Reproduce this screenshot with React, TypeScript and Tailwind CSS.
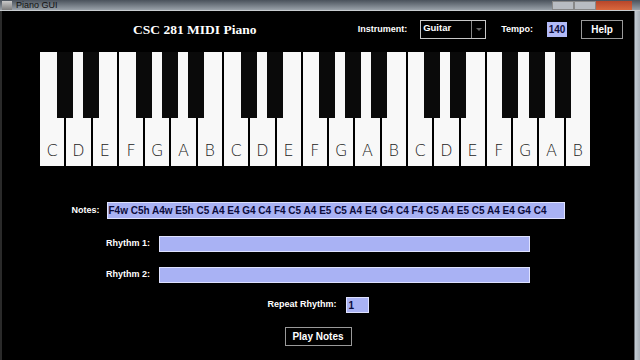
import React from "react";

const WHITE = ["C", "D", "E", "F", "G", "A", "B"];
const KEY_W = 550 / 21;

const sans = { fontFamily: '"Liberation Sans", Arial, sans-serif' };

function Keyboard() {
  const whites = Array.from({ length: 21 }, (_, i) => WHITE[i % 7]);
  // black keys sit right after C, D, F, G, A
  const blacks = whites
    .map((n, i) => ({ n, i }))
    .filter((k) => ["C", "D", "F", "G", "A"].includes(k.n));

  return (
    <div className="relative ml-[38px] mt-[4px] h-[114px] w-[550px] bg-black">
      <div className="flex h-full">
        {whites.map((n, i) => (
          <div
            key={i}
            className="flex h-full flex-1 items-end justify-center border-r-[2px] border-black bg-[#f8f8f8] pb-[7px] last:border-r-0"
          >
            <span
              className="text-[16px] font-light leading-none text-[#222] antialiased"
              style={{ fontFamily: '"DejaVu Sans", "Open Sans", sans-serif' }}
            >
              {n}
            </span>
          </div>
        ))}
      </div>
      {blacks.map(({ i }) => (
        <div
          key={i}
          className="absolute top-0 h-[66px] w-[16px] bg-[#0a0a0a]"
          style={{ left: (i + 1) * KEY_W - 9 }}
        />
      ))}
    </div>
  );
}

function Field({ w, h, children }: { w: string; h: string; children?: React.ReactNode }) {
  return (
    <div
      className={`${w} ${h} flex items-center border border-[#dfe2ff] bg-[#a9b2f4] px-[1px] text-[10px] font-bold text-[#0c0c3c]`}
      style={sans}
    >
      {children}
    </div>
  );
}

export default function App() {
  const notes =
    "F4w C5h A4w E5h C5 A4 E4 G4 C4 F4 C5 A4 E5 C5 A4 E4 G4 C4 F4 C5 A4 E5 C5 A4 E4 G4 C4";

  return (
    <div className="flex h-[360px] w-[640px] flex-col overflow-hidden bg-black antialiased" style={sans}>
      {/* window title bar, mostly scrolled off */}
      <div className="flex h-[11px] items-center overflow-hidden border-b border-[#c8ccd0] bg-gradient-to-b from-[#4a525c] to-[#9aa2aa]">
        <div className="ml-[2px] h-[9px] w-[10px] bg-gradient-to-b from-[#c9c9c9] to-[#7c7c7c]" />
        <span className="ml-[4px] text-[9px] leading-[10px] text-[#111]">Piano GUI</span>
        <div className="ml-auto flex h-[10px] items-end">
          <div className="h-[9px] w-[22px] border border-[#888] bg-[#b8bcc2]" />
          <div className="h-[9px] w-[22px] border border-[#888] bg-[#b8bcc2]" />
          <div className="mr-[8px] h-[9px] w-[36px] bg-gradient-to-b from-[#b8462a] to-[#d9683e]" />
        </div>
      </div>

      <div className="flex flex-1">
        <div className="w-[2px] bg-[#2a2a2a]" />
        <div className="flex flex-1 flex-col bg-black text-white">
          {/* header */}
          <div className="flex h-[37px] items-center">
            <span
              className="ml-[131px] mt-[1px] text-[13.5px] font-bold text-white"
              style={{ fontFamily: '"Liberation Serif", "DejaVu Serif", serif' }}
            >
              CSC 281 MIDI Piano
            </span>
            <div className="ml-auto mr-[11px] flex items-center text-[9px] font-bold">
              <span>Instrument:</span>
              <div className="ml-[13px] flex h-[19px] w-[66px] border border-[#c8c8c8]">
                <span className="flex-1 pl-[2px] pt-[2px] text-[9.5px] leading-none">Guitar</span>
                <div className="flex w-[14px] items-center justify-center border-l border-[#888]">
                  <div className="h-0 w-0 border-x-[3px] border-t-[3px] border-x-transparent border-t-[#666]" />
                </div>
              </div>
              <span className="ml-[15px]">Tempo:</span>
              <div className="ml-[14px] flex h-[15px] w-[20px] items-center justify-center bg-[#b3bbf8] text-[10px] text-[#0c0c3c]">
                140
              </div>
              <div className="ml-[14px] flex h-[19px] w-[42px] items-center justify-center border border-[#9a9a9a] text-[10px]">
                Help
              </div>
            </div>
          </div>

          <Keyboard />

          <div className="flex flex-col items-center text-[9px] font-bold">
            <div className="mt-[36px] flex items-center">
              <span className="mr-[7px]">Notes:</span>
              <Field w="w-[458px]" h="h-[17px]">
                <span className="whitespace-nowrap">{notes}</span>
              </Field>
            </div>
            <div className="mt-[17px] flex items-center">
              <span className="mr-[9px]">Rhythm 1:</span>
              <Field w="w-[371px]" h="h-[16px]" />
            </div>
            <div className="mt-[15px] flex items-center">
              <span className="mr-[9px]">Rhythm 2:</span>
              <Field w="w-[371px]" h="h-[16px]" />
            </div>
            <div className="mt-[14px] flex items-center">
              <span className="mr-[9px]">Repeat Rhythm:</span>
              <Field w="w-[23px]" h="h-[16px]">
                <span className="pl-[1px]">1</span>
              </Field>
            </div>
            <div className="mt-[14px] flex h-[19px] w-[67px] items-center justify-center border border-[#9a9a9a] text-[10px]">
              Play Notes
            </div>
          </div>
        </div>
        <div className="flex w-[6px]">
          <div className="w-[1px] bg-[#6a6e74]" />
          <div className="flex-1 bg-gradient-to-r from-[#c4ccd4] to-[#a8b0b8]" />
        </div>
      </div>
    </div>
  );
}
